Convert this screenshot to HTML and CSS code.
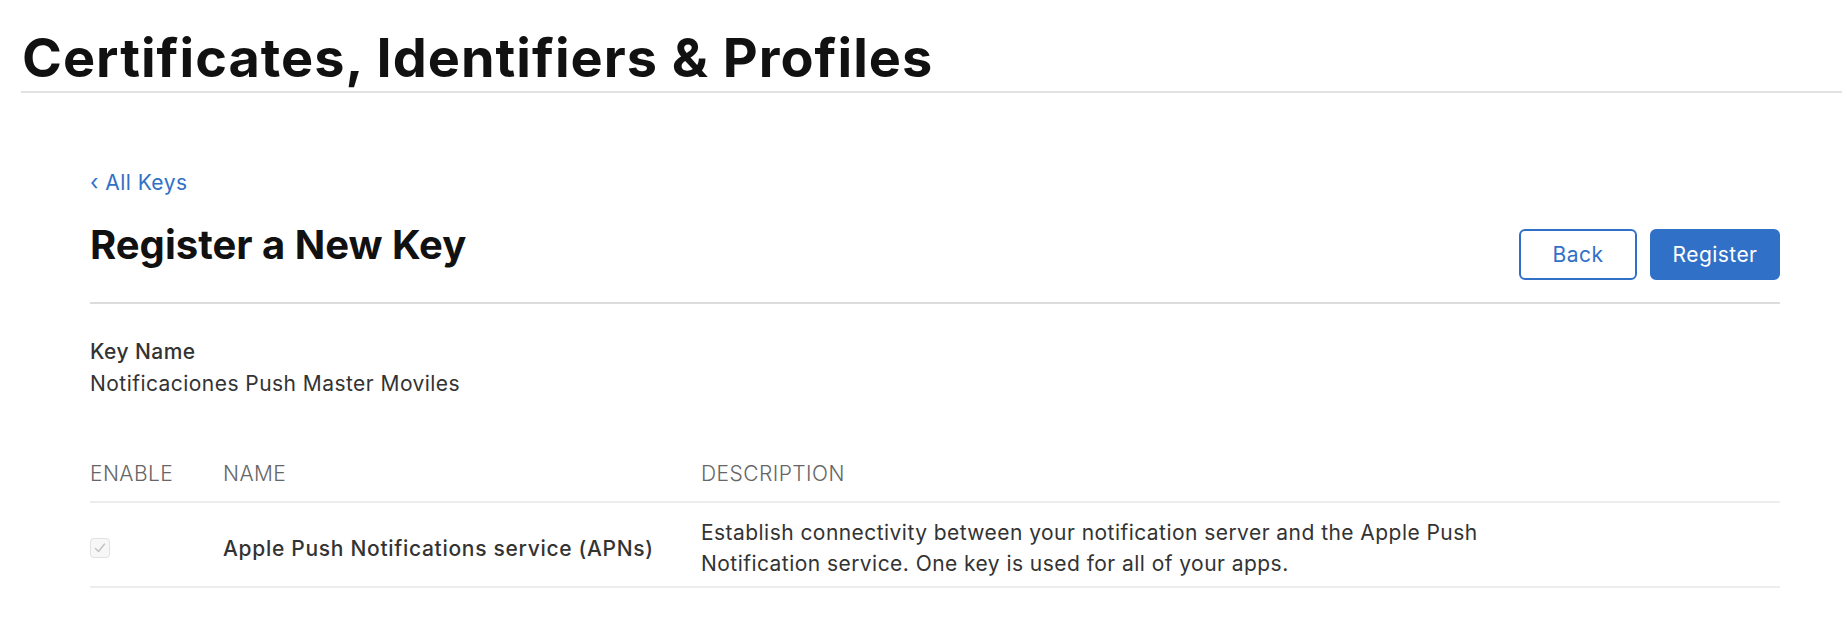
FILE: index.html
```html
<!DOCTYPE html>
<html lang='en'>
<head>
	<meta charset='UTF-8'>
	<title>Register a New Key</title>
	<link rel="stylesheet" href="styles.css">
</head>
<body>
<header class='page-header'>
	<h1 class='page-header__title'>Certificates, Identifiers &amp; Profiles</h1>
</header>

<main class='key-form'>
	<a class='key-form__back' href='#'><span class='key-form__chevron'>‹</span> All Keys</a>

	<div class='key-form__head'>
		<h2 class='key-form__title'>Register a New Key</h2>
		<div class='key-form__actions'>
			<button class='btn btn--secondary'>Back</button>
			<button class='btn btn--primary'>Register</button>
		</div>
	</div>

	<div class='key-field'>
		<p class='key-field__label'>Key Name</p>
		<p class='key-field__value'>Notificaciones Push Master Moviles</p>
	</div>

	<div class='services'>
		<div class='services__row services__row--head'>
			<div class='services__cell'>ENABLE</div>
			<div class='services__cell'>NAME</div>
			<div class='services__cell'>DESCRIPTION</div>
		</div>
		<div class='services__row services__row--body'>
			<div class='services__cell'>
				<span class='checkbox checkbox--disabled'>
					<svg width='14' height='14' viewBox='0 0 14 14'>
						<path d='M2.5 7.5 L5.5 10.5 L11.5 3' fill='none' stroke='#c4c4c4' stroke-width='1.6' stroke-linecap='round' stroke-linejoin='round'/>
					</svg>
				</span>
			</div>
			<div class='services__cell services__name'>Apple Push Notifications service (APNs)</div>
			<div class='services__cell services__desc'>Establish connectivity between your notification server and the Apple Push Notification service. One key is used for all of your apps.</div>
		</div>
	</div>
</main>
</body>
</html>
```

FILE: styles.css
```css
body {
    margin: 0;
    font-family: Inter, "Noto Sans", sans-serif;
    font-size: 21px;
    letter-spacing: 0.45px;
    color: #333;
    background: #fff;
}

p {
    margin: 0;
}

.page-header {
    margin-left: 21px;
    padding-top: 28px;
    padding-bottom: 3px;
    border-bottom: 2px solid #e2e2e2;
}

.page-header__title {
    margin: 0;
    padding-left: 1px;
    font-size: 54px;
    line-height: 60px;
    font-weight: 700;
    letter-spacing: 1px;
    color: #111;
}

.key-form {
    padding: 0 62px 0 90px;
}

.key-form__back {
    display: inline-block;
    margin-top: 77px;
    line-height: 24px;
    color: #3170c7;
    text-decoration: none;
}

.key-form__chevron {
    font-size: 22px;
}

.key-form__head {
    display: flex;
    justify-content: space-between;
    align-items: flex-start;
    margin-top: 34px;
    padding-bottom: 22px;
    border-bottom: 2px solid #dcdcdc;
}

.key-form__title {
    margin: 0;
    font-size: 40px;
    line-height: 32px;
    font-weight: 700;
    letter-spacing: 0;
    color: #111;
}

.key-form__actions {
    display: flex;
    gap: 13px;
}

.btn {
    height: 51px;
    border-radius: 6px;
    font-family: inherit;
    font-size: 21px;
    letter-spacing: 0.45px;
    cursor: pointer;
}

.btn--secondary {
    width: 118px;
    background: #fff;
    color: #3170c7;
    border: 2px solid #3170c7;
}

.btn--primary {
    width: 130px;
    background: #3170c7;
    color: #fff;
    border: 2px solid #3170c7;
}

.key-field {
    margin-top: 32px;
    line-height: 32px;
}

.key-field__label {
    font-weight: 500;
}

.services {
    margin-top: 58px;
}

.services__row {
    display: grid;
    grid-template-columns: 133px 478px 1fr;
    align-items: center;
    border-bottom: 2px solid #ededed;
}

.services__row--head {
    padding-bottom: 11px;
    line-height: 32px;
    color: #666;
    font-weight: 300;
}

.services__row--body {
    padding: 14px 0 7px;
}

.services__name {
    font-weight: 500;
    letter-spacing: 0.7px;
}

.services__desc {
    max-width: 840px;
    line-height: 31px;
}

.checkbox {
    display: flex;
    align-items: center;
    justify-content: center;
    width: 18px;
    height: 18px;
    border: 1px solid #e1e1e1;
    border-radius: 4px;
    background: #f7f7f7;
}
```
